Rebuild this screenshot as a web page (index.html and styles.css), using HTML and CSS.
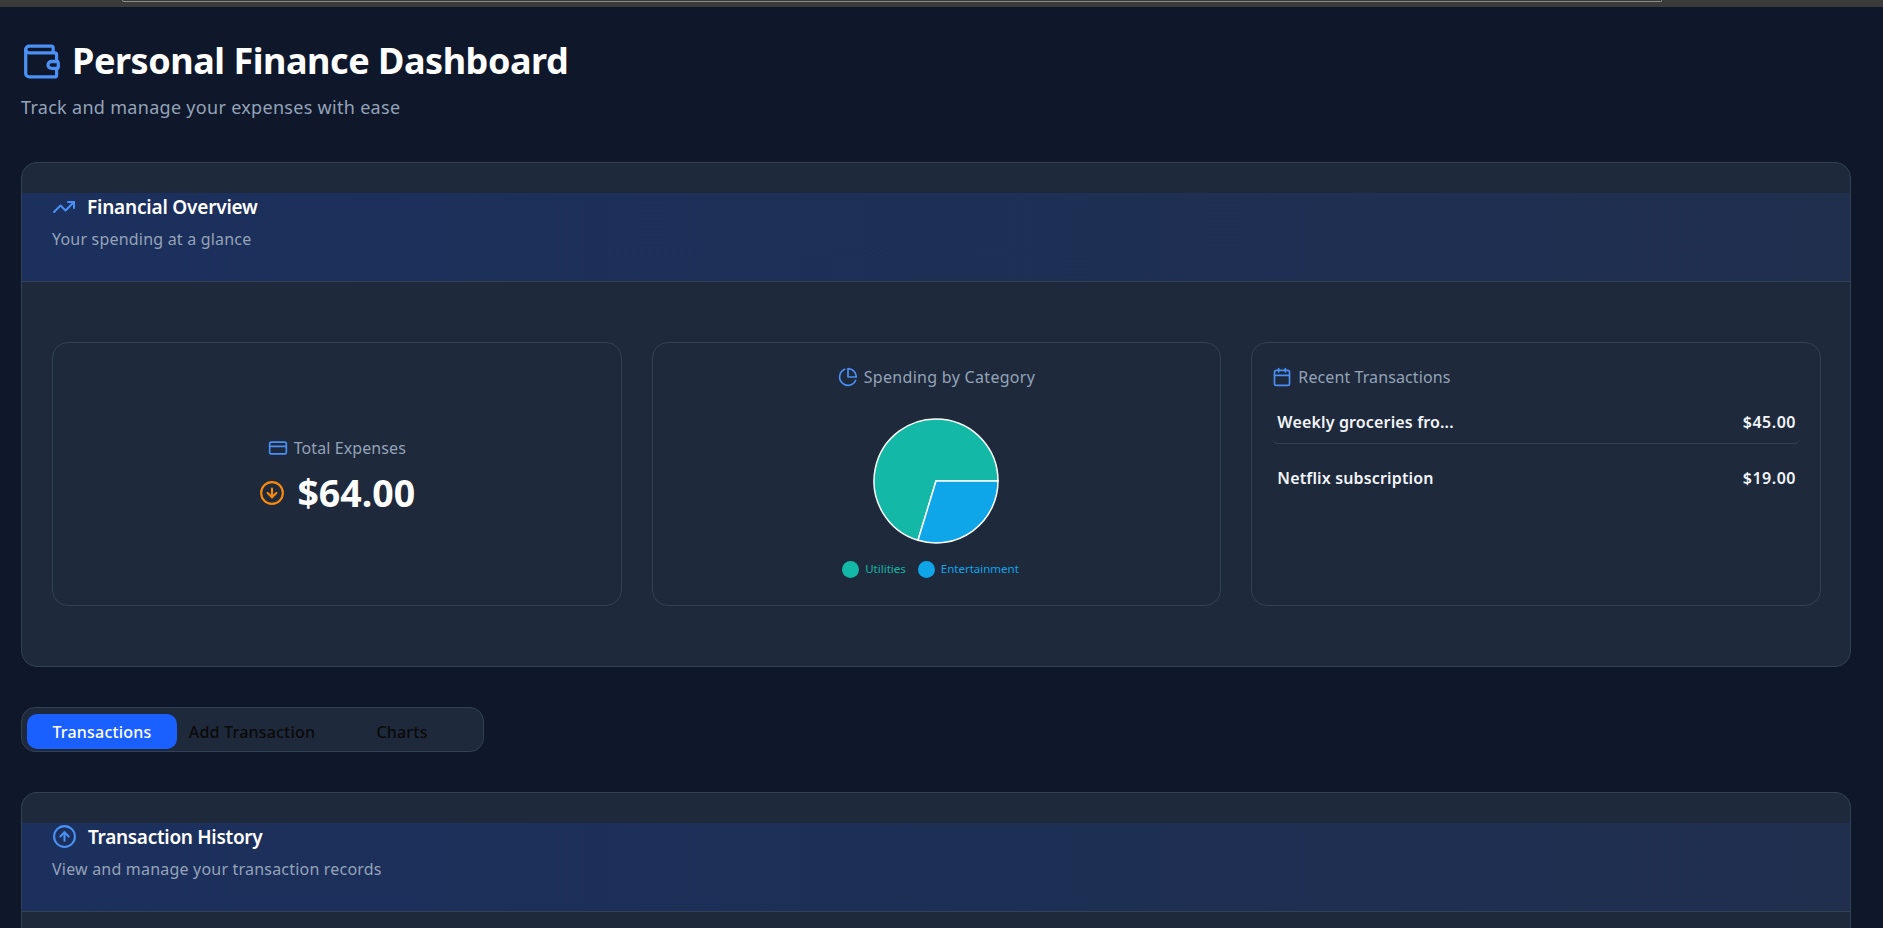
FILE: index.html
```html
<!DOCTYPE html>
<html lang="en">
<head>
    <meta charset="UTF-8">
    <meta name="viewport" content="width=device-width, initial-scale=1.0">
    <title>Personal Finance Dashboard</title>
    <link rel="stylesheet" href="styles.css">
</head>
<body>

    <div class="browser-strip"><div class="browser-pill"></div></div>

    <main class="page">
        <header class="page-header">
            <h1>
                <svg class="icon wallet-icon" viewBox="2 2 21 20"><path d="M19 7V4a1 1 0 0 0-1-1H5a2 2 0 0 0 0 4h15a1 1 0 0 1 1 1v4h-3a2 2 0 0 0 0 4h3a1 1 0 0 0 1-1v-2a1 1 0 0 0-1-1"/><path d="M3 5v14a2 2 0 0 0 2 2h15a1 1 0 0 0 1-1v-4"/></svg>
                Personal Finance Dashboard
            </h1>
            <p>Track and manage your expenses with ease</p>
        </header>

        <section class="card">
            <div class="card-header">
                <h2>
                    <svg class="icon trend-icon" viewBox="0 0 24 24"><polyline points="22 7 13.5 15.5 8.5 10.5 2 17"/><polyline points="16 7 22 7 22 13"/></svg>
                    Financial Overview
                </h2>
                <p>Your spending at a glance</p>
            </div>

            <div class="overview-grid">
                <div class="stat-card total-card">
                    <h3>
                        <svg class="icon small-icon" viewBox="0 0 24 24"><rect x="2" y="5" width="20" height="14" rx="2"/><line x1="2" y1="10" x2="22" y2="10"/></svg>
                        Total Expenses
                    </h3>
                    <div class="total-amount">
                        <svg class="icon down-icon" viewBox="0 0 24 24"><circle cx="12" cy="12" r="10"/><path d="M12 8v8"/><path d="m8 12 4 4 4-4"/></svg>
                        $64.00
                    </div>
                </div>

                <div class="stat-card chart-card">
                    <h3>
                        <svg class="icon small-icon" viewBox="0 0 24 24"><path d="M21.21 15.89A10 10 0 1 1 8 2.83"/><path d="M22 12A10 10 0 0 0 12 2v10z"/></svg>
                        Spending by Category
                    </h3>
                    <svg class="pie" viewBox="0 0 128 128">
                        <path class="slice-teal" d="M64 64 L126 64 A62 62 0 1 0 46 123.3 Z"/>
                        <path class="slice-blue" d="M64 64 L46 123.3 A62 62 0 0 0 126 64 Z"/>
                    </svg>
                    <ul class="legend">
                        <li class="legend-teal"><span class="dot"></span>Utilities</li>
                        <li class="legend-blue"><span class="dot"></span>Entertainment</li>
                    </ul>
                </div>

                <div class="stat-card recent-card">
                    <h3>
                        <svg class="icon small-icon" viewBox="0 0 24 24"><path d="M8 2v4"/><path d="M16 2v4"/><rect x="3" y="4" width="18" height="18" rx="2"/><path d="M3 10h18"/></svg>
                        Recent Transactions
                    </h3>
                    <div class="recent-row">
                        <span>Weekly groceries fro...</span>
                        <span class="recent-amount">$45.00</span>
                    </div>
                    <div class="recent-row">
                        <span>Netflix subscription</span>
                        <span class="recent-amount">$19.00</span>
                    </div>
                </div>
            </div>
        </section>

        <nav class="tabs">
            <button class="tab active">Transactions</button>
            <button class="tab">Add Transaction</button>
            <button class="tab">Charts</button>
        </nav>

        <section class="card history-card">
            <div class="card-header">
                <h2>
                    <svg class="icon history-icon" viewBox="0 0 24 24"><circle cx="12" cy="12" r="10"/><path d="m16 12-4-4-4 4"/><path d="M12 16V8"/></svg>
                    Transaction History
                </h2>
                <p>View and manage your transaction records</p>
            </div>
        </section>
    </main>

</body>
</html>
```

FILE: styles.css
```css
* {
    box-sizing: border-box;
}

body {
    margin: 0;
    background-color: #0f172a;
    color: white;
    font-family: "Noto Sans", "Open Sans", sans-serif;
}

.browser-strip {
    height: 7px;
    background-color: #3b3b3b;
}

.browser-pill {
    width: 1540px;
    height: 2px;
    margin-left: 122px;
    border: 1px solid #8a8a8a;
    border-top: none;
    border-radius: 0 0 6px 6px;
}

.page {
    padding: 0 32px 0 21px;
}

.icon {
    fill: none;
    stroke: #4a90f5;
    stroke-width: 2;
    stroke-linecap: round;
    stroke-linejoin: round;
    flex-shrink: 0;
}

.page-header {
    height: 155px;
    padding-top: 31px;
}

.page-header h1 {
    display: flex;
    align-items: center;
    gap: 12px;
    margin: 0 0 0 3px;
    font-size: 36px;
    line-height: 46px;
    font-weight: 700;
    letter-spacing: -0.46px;
}

.wallet-icon {
    width: 36px;
    height: 35px;
    stroke-width: 1.9;
}

.page-header p {
    margin: 10px 0 0;
    font-size: 18px;
    line-height: 26px;
    letter-spacing: 0.3px;
    color: #94a3b8;
}

.card {
    background-color: #1e293b;
    border: 1px solid #334155;
    border-radius: 16px;
    padding-top: 30px;
    height: 505px;
}

.card-header {
    height: 89px;
    padding: 0 30px;
    background: linear-gradient(to right, #1c305e, #202f4e);
    border-bottom: 1px solid #334155;
}

.card-header h2 {
    display: flex;
    align-items: center;
    gap: 11px;
    margin: 0;
    height: 27px;
    font-size: 19px;
    font-weight: 600;
    letter-spacing: -0.2px;
}

.card-header p {
    margin: 7px 0 0;
    font-size: 16px;
    line-height: 24px;
    letter-spacing: 0.2px;
    color: #94a3b8;
}

.trend-icon {
    width: 24px;
    height: 24px;
}

.overview-grid {
    display: grid;
    grid-template-columns: repeat(3, 1fr);
    gap: 30px;
    padding: 60px 29px 60px 30px;
}

.stat-card {
    height: 264px;
    border: 1px solid #334155;
    border-radius: 16px;
    padding: 20px;
}

.stat-card h3 {
    display: flex;
    align-items: center;
    gap: 6px;
    margin: 0;
    font-size: 16px;
    line-height: 28px;
    font-weight: 400;
    letter-spacing: 0.1px;
    color: #94a3b8;
}

.small-icon {
    width: 20px;
    height: 20px;
}

.total-card {
    display: flex;
    flex-direction: column;
    align-items: center;
    justify-content: center;
    padding-top: 22px;
}

.total-amount {
    display: flex;
    align-items: center;
    gap: 12px;
    margin-top: 7px;
    font-size: 37.5px;
    line-height: 48px;
    font-weight: 700;
}

.down-icon {
    width: 26px;
    height: 26px;
    margin-left: 1px;
    stroke: #f58a0b;
}

.chart-card {
    display: flex;
    flex-direction: column;
    align-items: center;
}

.chart-card h3 {
    letter-spacing: 0.3px;
}

.pie {
    display: block;
    width: 128px;
    height: 128px;
    margin-top: 26px;
}

.slice-teal, .slice-blue {
    stroke: white;
    stroke-width: 1.5;
}

.slice-teal {
    fill: #14b8a6;
}

.slice-blue {
    fill: #0ea5e9;
}

.legend {
    display: flex;
    gap: 12px;
    list-style-type: none;
    margin: 14px 12px 0 0;
    padding: 0;
    font-size: 11.5px;
    line-height: 20px;
}

.legend li {
    display: flex;
    align-items: center;
    gap: 6px;
}

.dot {
    width: 17px;
    height: 17px;
    border-radius: 50%;
    background-color: currentColor;
}

.legend-teal {
    color: #14b8a6;
}

.legend-blue {
    color: #0ea5e9;
}

.recent-card h3 {
    margin-bottom: 10px;
}

.recent-row {
    display: flex;
    justify-content: space-between;
    padding: 0 4px 0 5px;
    height: 42px;
    font-size: 16px;
    line-height: 42px;
    font-weight: 600;
    letter-spacing: 0.15px;
    color: #f1f5f9;
}

.recent-row + .recent-row {
    margin-top: 13px;
}

.recent-row:nth-of-type(1) {
    height: 43px;
    border-bottom: 1px solid #334155;
    border-radius: 0 0 6px 6px;
}

.recent-amount {
    letter-spacing: 0.5px;
}

.tabs {
    display: flex;
    width: 463px;
    height: 45px;
    margin-top: 40px;
    padding: 6px 6px 2px 5px;
    background-color: #1e293b;
    border: 1px solid #334155;
    border-radius: 14px;
}

.tab {
    flex: 1;
    border: none;
    background: none;
    border-radius: 10px;
    font-family: inherit;
    font-size: 16px;
    font-weight: 500;
    letter-spacing: 0.2px;
    color: #0a0a0a;
    cursor: pointer;
}

.tab.active {
    background-color: #1a5fff;
    color: white;
}

.history-card {
    height: 136px;
    margin-top: 40px;
    border-bottom: none;
    border-radius: 16px 16px 0 0;
}

.history-card h2 {
    letter-spacing: -0.3px;
}

.history-icon {
    width: 25px;
    height: 25px;
}
```
